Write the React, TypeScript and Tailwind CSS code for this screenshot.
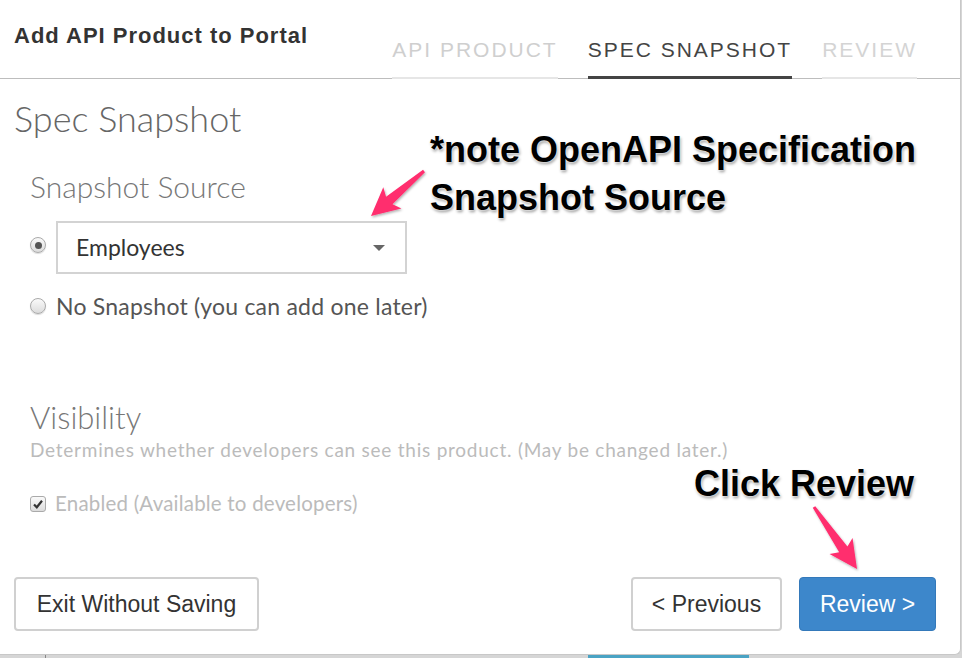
import React from "react";

const helv = "font-['Liberation_Sans',Arial,sans-serif]";
const lato = "font-['Lato','Open_Sans',sans-serif]";
const shadow =
  "[text-shadow:0_0_2px_#fff,0_0_3px_#fff,1px_2px_3px_rgba(0,0,0,0.45)]";

function Radio({ checked }: { checked?: boolean }) {
  return (
    <span className="w-[16px] h-[16px] rounded-full border border-[#aaa] bg-gradient-to-b from-[#fafafa] to-[#dcdcdc] flex items-center justify-center shadow-[0_1px_1px_rgba(0,0,0,0.15)] shrink-0">
      {checked && <span className="w-[7px] h-[7px] rounded-full bg-[#555]" />}
    </span>
  );
}

function arrowPoints(tx: number, ty: number, hx: number, hy: number) {
  const dx = hx - tx;
  const dy = hy - ty;
  const len = Math.hypot(dx, dy);
  const ux = dx / len;
  const uy = dy / len;
  const px = -uy;
  const py = ux;
  const headLen = 28;
  const headHalf = 14;
  const shaftTail = 1.5;
  const shaftHead = 5;
  const bx = hx - ux * headLen;
  const by = hy - uy * headLen;
  const pts: [number, number][] = [
    [tx + px * shaftTail, ty + py * shaftTail],
    [bx + ux * 4 + px * shaftHead, by + uy * 4 + py * shaftHead],
    [bx + px * headHalf, by + py * headHalf],
    [hx, hy],
    [bx - px * headHalf, by - py * headHalf],
    [bx + ux * 4 - px * shaftHead, by + uy * 4 - py * shaftHead],
    [tx - px * shaftTail, ty - py * shaftTail],
  ];
  return pts.map((p) => p.join(",")).join(" ");
}

export default function App() {
  return (
    <div className="relative w-[962px] h-[658px] bg-[#d6d6d6] overflow-hidden flex flex-col">
      <div className="w-[961px] h-[655px] bg-white border-r border-b border-[#c8c8c8] rounded-br-[6px] flex flex-col">
        {/* header */}
        <div className="h-[79px] border-b border-[#bdbdbd] flex items-start justify-between pl-[14px] pr-[43px]">
          <h1 className={`${helv} font-bold text-[22px] tracking-[0.045em] text-[#333] mt-[23px] leading-[26px]`}>
            Add API Product to Portal
          </h1>
          <div className={`${helv} flex items-end h-full text-[21px] tracking-[0.095em] gap-[30px]`}>
            <div className="h-full flex items-center pt-[22px] border-b-[2px] border-[#e6e6e6] text-[#cfcfcf] -mb-[1px]">
              API PRODUCT
            </div>
            <div className="h-full flex items-center pt-[22px] border-b-[3px] border-[#444] text-[#444] -mb-[1px]">
              SPEC SNAPSHOT
            </div>
            <div className="h-full flex items-center pt-[22px] border-b-[2px] border-[#e6e6e6] text-[#d4d4d4] -mb-[1px]">
              REVIEW
            </div>
          </div>
        </div>

        {/* body */}
        <div className="flex-1 flex flex-col pl-[14px]">
          <h2 className={`${lato} font-light text-[36px] text-[#666] mt-[17px] leading-[44px]`}>
            Spec Snapshot
          </h2>
          <div className="pl-[16px]">
            <h3 className={`${lato} font-light text-[30px] text-[#777] mt-[28px] leading-[36px]`}>
              Snapshot Source
            </h3>
            <div className="flex items-start mt-[17px] gap-[10px]">
              <div className="mt-[16px]">
                <Radio checked />
              </div>
              <div className="w-[351px] h-[53px] border-2 border-[#d3d3d3] flex items-center justify-between pl-[18px] pr-[20px]">
                <span className={`${lato} text-[23px] text-[#333]`}>Employees</span>
                <span className="w-0 h-0 border-l-[6px] border-r-[6px] border-t-[6px] border-l-transparent border-r-transparent border-t-[#666]" />
              </div>
            </div>
            <div className="flex items-center mt-[18px] gap-[10px] h-[28px]">
              <Radio />
              <span className={`${lato} text-[23px] text-[#555] tracking-[0.01em]`}>
                No Snapshot (you can add one later)
              </span>
            </div>

            <h3 className={`${lato} font-light text-[31px] text-[#777] mt-[79px] leading-[36px]`}>
              Visibility
            </h3>
            <p className={`${lato} text-[19px] text-[#bbb] tracking-[0.04em] mt-[3px] leading-[24px]`}>
              Determines whether developers can see this product. (May be changed later.)
            </p>
            <div className="flex items-center mt-[29px] gap-[9px] h-[25px]">
              <span className="w-[16px] h-[16px] rounded-[3px] border border-[#aaa] bg-gradient-to-b from-[#fafafa] to-[#dcdcdc] flex items-center justify-center">
                <svg width="12" height="12" viewBox="0 0 12 12">
                  <path d="M2 6.5 L4.8 9.3 L10 2.8" stroke="#333" strokeWidth="2.2" fill="none" />
                </svg>
              </span>
              <span className={`${lato} text-[20.5px] text-[#bbb] tracking-[0.01em]`}>
                Enabled (Available to developers)
              </span>
            </div>
          </div>

          {/* footer buttons */}
          <div className="flex items-center mt-[61px] pr-[24px]">
            <button className={`${helv} w-[245px] h-[54px] border-2 border-[#d0d0d0] rounded-[4px] text-[23px] text-[#333] bg-white`}>
              Exit Without Saving
            </button>
            <div className="flex-1" />
            <button className={`${helv} w-[151px] h-[54px] border-2 border-[#d0d0d0] rounded-[4px] text-[23px] text-[#333] bg-white`}>
              &lt; Previous
            </button>
            <button className={`${helv} w-[137px] h-[54px] ml-[17px] rounded-[4px] text-[23px] text-white bg-[#3d87cb] border border-[#3479ba]`}>
              Review &gt;
            </button>
          </div>
        </div>
      </div>
      <div className="flex-1 flex">
        <div className="ml-[45px] w-[1px] bg-[#888]" />
        <div className="ml-[542px] w-[161px] bg-[#4aa3c4]" />
      </div>

      {/* annotations */}
      <div className={`${helv} absolute left-[430px] top-[126px] font-bold text-[36px] leading-[48px] text-black ${shadow}`}>
        *note OpenAPI Specification
        <br />
        Snapshot Source
      </div>
      <div className={`${helv} absolute left-[694px] top-[462px] font-bold text-[36px] leading-[44px] text-black ${shadow}`}>
        Click Review
      </div>
      <svg className="absolute left-0 top-0 pointer-events-none" width="962" height="658">
        <defs>
          <filter id="sh" x="-20%" y="-20%" width="140%" height="140%">
            <feDropShadow dx="1" dy="1.5" stdDeviation="1.2" floodOpacity="0.3" />
          </filter>
        </defs>
        <polygon points={arrowPoints(424, 171, 371, 216)} fill="#ff2d6e" filter="url(#sh)" />
        <polygon points={arrowPoints(814, 507, 857, 569)} fill="#ff2d6e" filter="url(#sh)" />
      </svg>
    </div>
  );
}
